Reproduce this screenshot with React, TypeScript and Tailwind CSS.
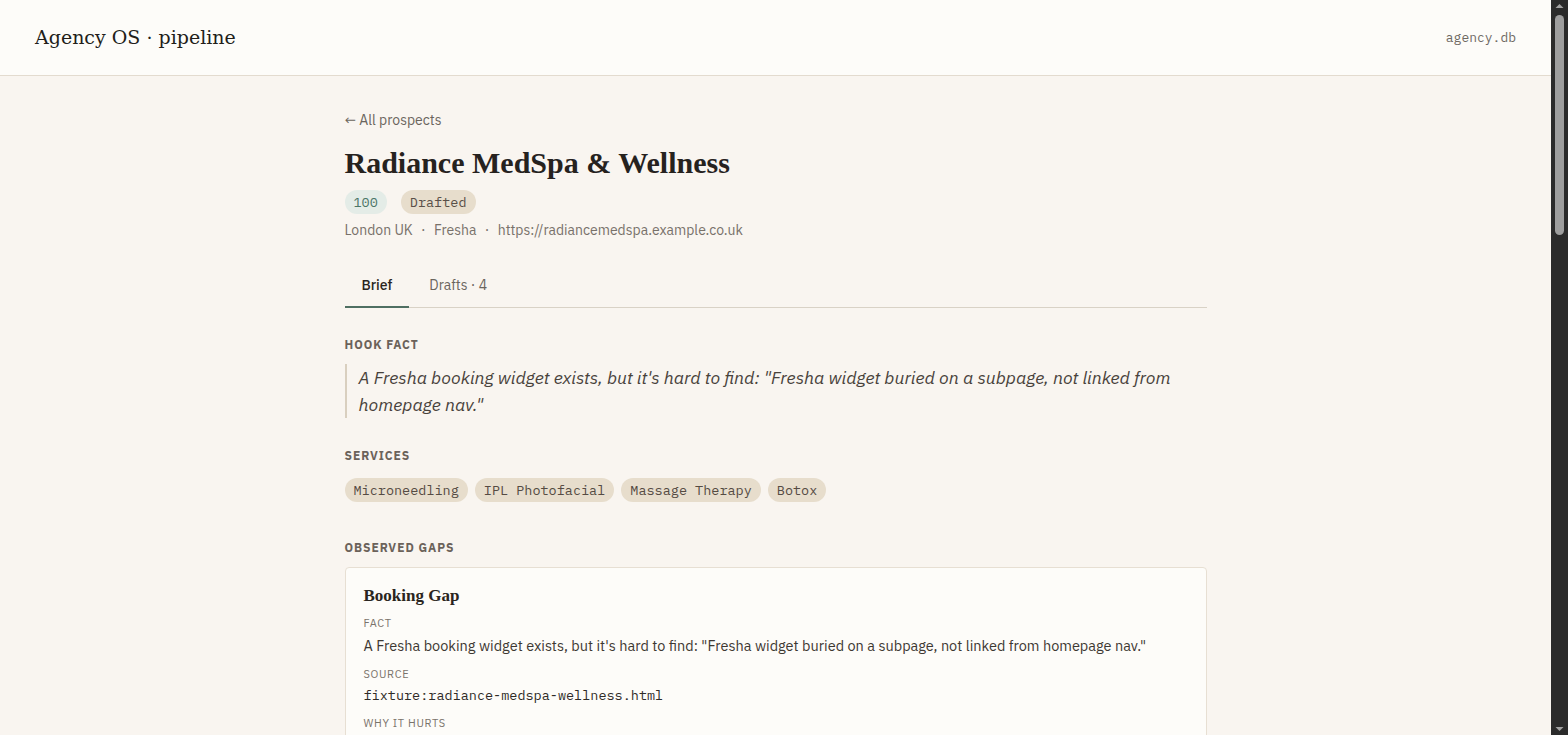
import React from "react";

const serif = "font-['Liberation_Serif','DejaVu_Serif',serif]";
const sans = "font-['IBM_Plex_Sans','Roboto','Noto_Sans',sans-serif]";
const mono = "font-['IBM_Plex_Mono','Liberation_Mono','DejaVu_Sans_Mono',monospace]";

interface Gap {
  title: string;
  fact: string;
  source: string;
  why: string;
}

const services = ["Microneedling", "IPL Photofacial", "Massage Therapy", "Botox"];

const gaps: Gap[] = [
  {
    title: "Booking Gap",
    fact: 'A Fresha booking widget exists, but it\'s hard to find: "Fresha widget buried on a subpage, not linked from homepage nav."',
    source: "fixture:radiance-medspa-wellness.html",
    why: "Visitors who land on the homepage ready to book have no obvious path to the calendar, so high-intent traffic leaks away before it converts.",
  },
  {
    title: "Reviews Gap",
    fact: "No testimonials or review widgets appear anywhere on the homepage or treatment pages.",
    source: "fixture:radiance-medspa-wellness.html",
    why: "Aesthetic treatments are a trust purchase; without visible social proof, first-time visitors compare on price alone.",
  },
  {
    title: "Pricing Gap",
    fact: "Treatment pages describe Microneedling and IPL Photofacial but list no prices or package options.",
    source: "fixture:radiance-medspa-wellness.html",
    why: "Prospects who cannot gauge cost tend to bounce to competitors that publish clear price ranges.",
  },
];

function SectionLabel({ children }: { children: React.ReactNode }) {
  return (
    <h3 className={`${sans} text-[12px] leading-4 font-bold uppercase tracking-[0.08em] text-[#6b625a]`}>
      {children}
    </h3>
  );
}

function FieldLabel({ children }: { children: React.ReactNode }) {
  return (
    <div className={`${sans} text-[11px] leading-4 uppercase tracking-[0.06em] text-[#7a736b]`}>{children}</div>
  );
}

function GapCard({ gap }: { gap: Gap }) {
  return (
    <div className="rounded border border-[#e7dfd3] bg-[#fdfcf9] px-[18px] pt-[16px] pb-[18px]">
      <h4 className={`${serif} text-[17px] leading-6 font-bold text-[#2a2520]`}>{gap.title}</h4>
      <div className="mt-[7px]">
        <FieldLabel>Fact</FieldLabel>
        <p className={`${sans} mt-[5px] text-[14.5px] leading-5 text-[#3d3832]`}>{gap.fact}</p>
      </div>
      <div className="mt-[10px]">
        <FieldLabel>Source</FieldLabel>
        <p className={`${mono} mt-[3px] text-[13.5px] leading-5 text-[#2f2b27]`}>{gap.source}</p>
      </div>
      <div className="mt-[10px]">
        <FieldLabel>Why it hurts</FieldLabel>
        <p className={`${sans} mt-[4px] text-[14.5px] leading-5 text-[#3d3832]`}>{gap.why}</p>
      </div>
    </div>
  );
}

// dark window scroll rail pinned to the right edge
function ScrollRail() {
  return (
    <div aria-hidden className="fixed top-0 right-0 flex h-screen w-[17px] flex-col items-center bg-[#2b2b2b]">
      <svg width="9" height="15" viewBox="0 0 9 15" className="shrink-0">
        <path d="M0.5 8 L4.5 4 L8.5 8 Z" fill="#a3a3a3" />
      </svg>
      <div className="h-[220px] w-[9px] rounded-full bg-[#9e9e9e]" />
      <div className="flex-1" />
      <svg width="9" height="15" viewBox="0 0 9 15" className="shrink-0">
        <path d="M0.5 7 L4.5 11 L8.5 7 Z" fill="#a3a3a3" />
      </svg>
    </div>
  );
}

export default function App() {
  return (
    <div className="min-h-screen bg-[#f9f5f0] pr-[17px]">
      <header className="flex h-[76px] items-center justify-between border-b border-[#e3dbcf] bg-[#fdfcf9] px-[35px]">
        <h1 className="font-['DejaVu_Serif',serif] text-[19px] text-[#221e1a]">Agency OS · pipeline</h1>
        <span className={`${mono} text-[13px] text-[#6f6a64]`}>agency.db</span>
      </header>

      <main className="mx-auto max-w-[862px] pt-[34px] pb-24">
        <a className={`${sans} block text-[14px] leading-5 text-[#6b655d]`}>← All prospects</a>

        <h2 className={`${serif} mt-[15px] text-[30px] leading-9 font-bold text-[#26221e]`}>
          Radiance MedSpa &amp; Wellness
        </h2>

        <div className="mt-[9px] flex items-center gap-[14px]">
          <span className={`${mono} rounded-full bg-[#e4ece7] px-[9px] text-[13.5px] leading-6 text-[#4c7667]`}>100</span>
          <span className={`${mono} rounded-full bg-[#e7ddcc] px-[9px] text-[13.5px] leading-6 text-[#5a5048]`}>Drafted</span>
        </div>

        <p className={`${sans} mt-[6px] text-[14px] leading-5 text-[#78716a]`}>
          London UK <span className="mx-[5px]">·</span> Fresha <span className="mx-[5px]">·</span>{" "}
          https://radiancemedspa.example.co.uk
        </p>

        <nav className={`${sans} mt-[25px] flex border-b border-[#d9d2c6] text-[14px] leading-5`}>
          <button className="-mb-px border-b-2 border-[#4f6f62] px-[17px] pt-[10px] pb-[11px] font-medium text-[#2a2520]">
            Brief
          </button>
          <button className="-mb-px border-b-2 border-transparent px-[20px] pt-[10px] pb-[11px] text-[#6b655d]">
            Drafts · 4
          </button>
        </nav>

        <section className="mt-[29px]">
          <SectionLabel>Hook fact</SectionLabel>
          <blockquote
            className={`${sans} mt-[11px] border-l-2 border-[#d9cfbf] pl-[12px] text-[17.7px] leading-[27px] italic text-[#48423b]`}
          >
            A Fresha booking widget exists, but it's hard to find: "Fresha widget buried on a subpage, not linked from
            homepage nav."
          </blockquote>
        </section>

        <section className="mt-[30px]">
          <SectionLabel>Services</SectionLabel>
          <div className="mt-[14px] flex flex-wrap gap-[7px]">
            {services.map((s) => (
              <span
                key={s}
                className={`${mono} rounded-full bg-[#e7ddcc] px-[9px] text-[13.5px] leading-6 text-[#554b43]`}
              >
                {s}
              </span>
            ))}
          </div>
        </section>

        <section className="mt-[38px]">
          <SectionLabel>Observed gaps</SectionLabel>
          <div className="mt-[11px] flex flex-col gap-3">
            {gaps.map((g) => (
              <GapCard key={g.title} gap={g} />
            ))}
          </div>
        </section>

        <section className="mt-[38px]">
          <SectionLabel>Recommended angle</SectionLabel>
          <p className={`${sans} mt-[12px] text-[15px] leading-6 text-[#3d3832]`}>
            Lead with the buried booking widget: show how a single homepage call-to-action linked to the existing Fresha
            calendar could capture visitors who already want to book, then follow with reviews and transparent pricing.
          </p>
        </section>

        <section className="mt-[38px]">
          <SectionLabel>Contacts</SectionLabel>
          <div className="mt-[12px] rounded border border-[#e7dfd3] bg-[#fdfcf9] px-[18px] py-[16px]">
            <div className="flex justify-between">
              <div>
                <FieldLabel>Email</FieldLabel>
                <p className={`${mono} mt-[3px] text-[13.5px] leading-5 text-[#2f2b27]`}>hello@radiancemedspa.example.co.uk</p>
              </div>
              <div>
                <FieldLabel>Phone</FieldLabel>
                <p className={`${mono} mt-[3px] text-[13.5px] leading-5 text-[#2f2b27]`}>+44 20 7946 0321</p>
              </div>
            </div>
          </div>
        </section>

        <section className="mt-[38px]">
          <SectionLabel>Notes</SectionLabel>
          <div className="mt-[12px] h-[420px] rounded border border-[#e7dfd3] bg-[#fdfcf9]" />
        </section>
      </main>

      <ScrollRail />
    </div>
  );
}
